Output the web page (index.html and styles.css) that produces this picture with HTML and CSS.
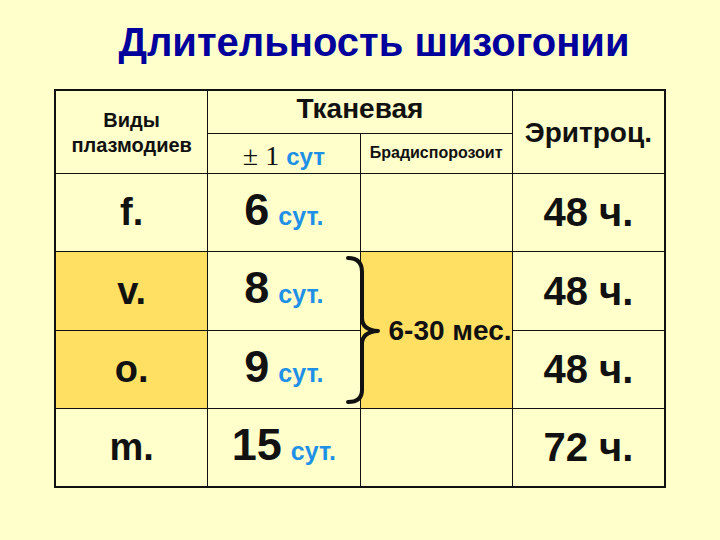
FILE: index.html
```html
<!DOCTYPE html>
<html lang="ru">
<head>
<meta charset="utf-8">
<title>Длительность шизогонии</title>
<link rel="stylesheet" href="styles.css">
</head>
<body>
<h1 class="title">Длительность шизогонии</h1>
<div class="table-wrap">
  <div class="grid">
    <div class="cell species">Виды<br>плазмодиев</div>
    <div class="cell tissue">Тканевая</div>
    <div class="cell erythro">Эритроц.</div>
    <div class="cell sub-days"><span class="pm">± 1</span><span class="unit-h">сут</span></div>
    <div class="cell sub-brad">Брадиспорозоит</div>

    <div class="cell sp">f.</div>
    <div class="cell days"><span class="num">6</span><span class="unit">сут.</span></div>
    <div class="cell"></div>
    <div class="cell hours">48 ч.</div>

    <div class="cell sp gold">v.</div>
    <div class="cell days"><span class="num">8</span><span class="unit">сут.</span></div>
    <div class="cell merged gold">6-30 мес.</div>
    <div class="cell hours">48 ч.</div>

    <div class="cell sp gold">o.</div>
    <div class="cell days"><span class="num">9</span><span class="unit">сут.</span></div>
    <div class="cell hours">48 ч.</div>

    <div class="cell sp">m.</div>
    <div class="cell days"><span class="num">15</span><span class="unit">сут.</span></div>
    <div class="cell"></div>
    <div class="cell hours">72 ч.</div>
  </div>
  <svg class="brace" width="40" height="156" viewBox="0 0 40 156">
    <path d="M4 6 Q18 6 18 20 L18 66 Q18 78 34 79 Q18 80 18 92 L18 138 Q18 150 4 150" fill="none" stroke="#111" stroke-width="4" stroke-linecap="round" stroke-linejoin="round"/>
  </svg>
</div>
</body>
</html>
```
FILE: styles.css
```css
html, body {
  margin: 0;
  padding: 0;
  background: #FFFFCC;
}
body {
  font-family: "Liberation Sans", Arial, sans-serif;
  color: #111;
  width: 720px;
  height: 540px;
  overflow: hidden;
}
.title {
  margin: 0;
  padding: 18px 0 0 28px;
  height: 48px;
  line-height: 48px;
  font-size: 40px;
  font-weight: bold;
  text-align: center;
  color: #00009C;
}
.table-wrap {
  position: relative;
  margin: 23px 0 0 54px;
  width: 612px;
}
.grid {
  box-sizing: border-box;
  width: 612px;
  display: grid;
  grid-template-columns: repeat(4, 1fr);
  grid-template-rows: 42px 39px 77px 78px 77px 77px;
  gap: 1px;
  background: #111;
  border: 2px solid #111;
}
.cell {
  background: #FFFFCC;
  display: flex;
  align-items: center;
  justify-content: center;
  font-weight: bold;
  white-space: nowrap;
}
.gold {
  background: #FFE062;
}
.species {
  grid-column: 1;
  grid-row: 1 / span 2;
  font-size: 20px;
  line-height: 25px;
  text-align: center;
  padding-top: 2px;
}
.tissue {
  grid-column: 2 / span 2;
  grid-row: 1;
  font-size: 28px;
  padding-bottom: 6px;
}
.erythro {
  grid-column: 4;
  grid-row: 1 / span 2;
  font-size: 28px;
  padding-top: 2px;
}
.sub-days {
  grid-column: 2;
  grid-row: 2;
  align-items: baseline;
  padding-top: 6px;
}
.pm {
  font-family: "Liberation Serif", "Times New Roman", serif;
  font-weight: normal;
  font-size: 28px;
  margin-right: 7px;
}
.unit-h {
  color: #1E90E6;
  font-size: 24px;
}
.sub-brad {
  grid-column: 3;
  grid-row: 2;
  font-size: 16px;
  padding-bottom: 2px;
}
.sp {
  font-size: 38px;
}
.days {
  align-items: baseline;
  padding-top: 10px;
}
.num {
  font-size: 45px;
}
.unit {
  color: #1E90E6;
  font-size: 25px;
  margin-left: 9px;
}
.hours {
  font-size: 40px;
}
.merged {
  grid-column: 3;
  grid-row: 4 / span 2;
  justify-content: flex-start;
  padding-left: 28px;
  padding-top: 2px;
  font-size: 28px;
  overflow: visible;
}
.brace {
  position: absolute;
  left: 290px;
  top: 163px;
}
```
